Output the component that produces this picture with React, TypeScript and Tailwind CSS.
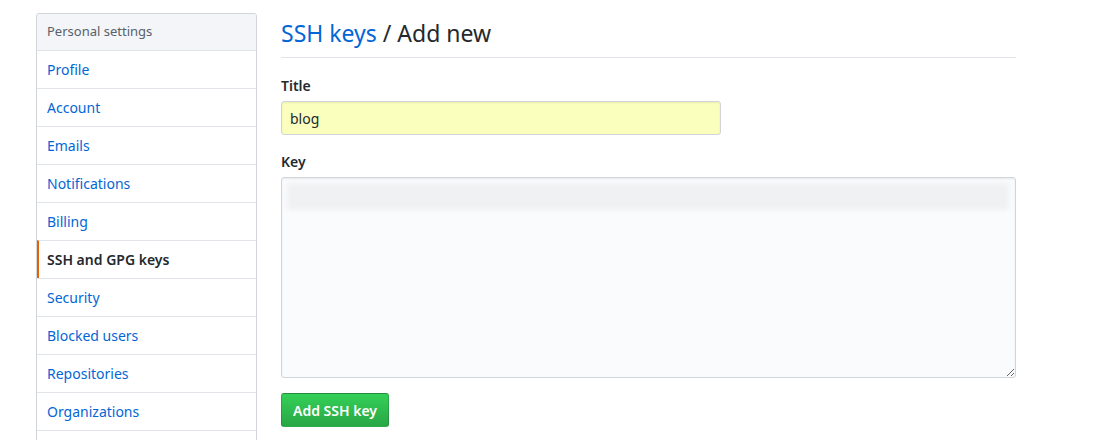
import React from "react";

const items = [
  "Profile",
  "Account",
  "Emails",
  "Notifications",
  "Billing",
  "SSH and GPG keys",
  "Security",
  "Blocked users",
  "Repositories",
  "Organizations",
];

export default function App() {
  return (
    <div
      className="min-h-screen bg-white text-[#24292e] pl-[36px] pt-[13px] flex gap-[24px]"
      style={{ fontFamily: '"Noto Sans", "Open Sans", Arial, sans-serif' }}
    >
      <nav className="w-[221px] shrink-0 border border-[#d1d5da] rounded-t-[3px] self-start">
        <div className="h-[36px] flex items-center px-[10px] bg-[#f3f5f8] text-[13px] text-[#586069] rounded-t-[3px]">
          Personal settings
        </div>
        {items.map((item) => {
          const selected = item === "SSH and GPG keys";
          return (
            <div
              key={item}
              className={
                selected
                  ? "h-[38px] flex items-center border-t border-[#e1e4e8] border-l-2 border-l-[#e36209] pl-[8px] text-[14px] font-semibold text-[#24292e]"
                  : "h-[38px] flex items-center border-t border-[#e1e4e8] px-[10px] text-[14px] text-[#0366d6]"
              }
            >
              {item}
            </div>
          );
        })}
        <div className="h-[38px] border-t border-[#e1e4e8]" />
      </nav>

      <main className="w-[735px] pt-[2px]">
        <h2 className="text-[23px] leading-[36px] pb-[6px] border-b border-[#e1e4e8] font-normal">
          <span className="text-[#0366d6]">SSH keys</span> / Add new
        </h2>

        <form className="mt-[17px]">
          <label className="block text-[14px] leading-[21px] font-semibold">Title</label>
          <input
            type="text"
            defaultValue="blog"
            className="mt-[5px] block w-[440px] h-[34px] px-[8px] text-[14px] bg-[#faffbd] border border-[#d1d5da] rounded-[3px] outline-none shadow-[inset_0_1px_2px_rgba(27,31,35,0.075)]"
          />

          <label className="block mt-[16px] text-[14px] leading-[21px] font-semibold">Key</label>
          <div className="relative mt-[5px]">
            <textarea className="block w-[735px] h-[201px] bg-[#fafbfc] border border-[#d1d5da] rounded-[3px] outline-none shadow-[inset_0_1px_2px_rgba(27,31,35,0.075)]" />
            <div className="absolute left-[6px] top-[6px] w-[722px] h-[27px] bg-[#f0f1f3] blur-[2px] rounded-[4px] pointer-events-none" />
          </div>

          <button
            type="button"
            className="mt-[15px] h-[34px] px-[11px] text-[14px] font-semibold text-white rounded-[3px] border border-[rgba(27,31,35,0.2)] bg-gradient-to-b from-[#34d058] to-[#28a745]"
          >
            Add SSH key
          </button>
        </form>
      </main>
    </div>
  );
}
